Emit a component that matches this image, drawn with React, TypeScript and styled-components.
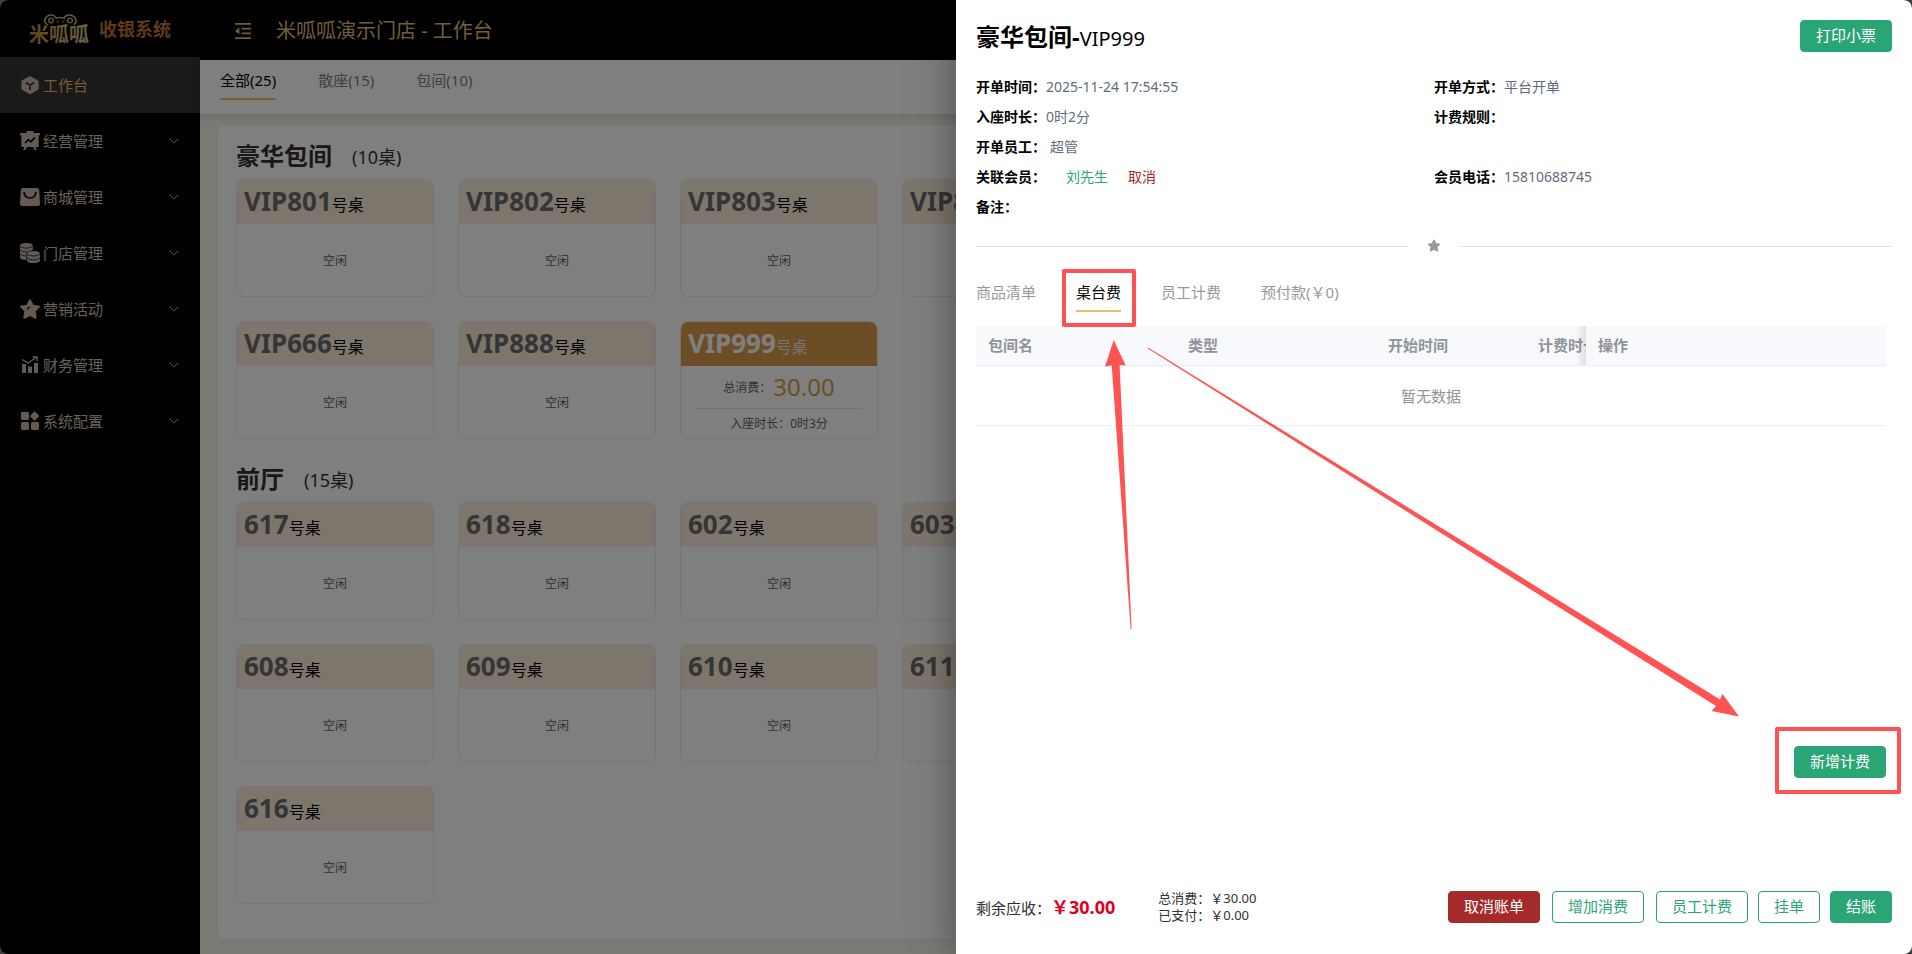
import React from "react";
import styled, { createGlobalStyle, css } from "styled-components";

const gold = "#e6c068";
const green = "#2aa676";
const red = "#ff5252";

const GlobalStyle = createGlobalStyle`
  * { box-sizing: border-box; }
  html, body { margin: 0; padding: 0; }
  body {
    background: #3c3c3e;
    color: #303133;
    font-family: "Noto Sans", "Noto Sans CJK SC", sans-serif;
    font-size: 15px;
  }
  h1, h2, p, dl, dd, dt { margin: 0; font-weight: inherit; }
  button { font-family: inherit; cursor: pointer; }
  a { text-decoration: none; }
`;

const Shell = styled.div`
  position: relative;
  display: flex;
  min-height: 100vh;
  border-radius: 8px;
  overflow: hidden;
  background: #f6f2e8;
`;

/* ---------- side navigation ---------- */

const Sidebar = styled.aside`
  flex: none;
  width: 200px;
  background: #000;
`;

const Brand = styled.div`
  display: flex;
  align-items: center;
  gap: 5px;
  height: 57px;
  padding-left: 28px;
`;

const BrandName = styled.span`
  color: #bc762c;
  font-size: 18px;
  line-height: 24px;
  font-weight: 700;
`;

const NavLink = styled.a<{ $active?: boolean }>`
  display: flex;
  align-items: center;
  gap: 3px;
  height: 56px;
  padding: 0 20px;
  font-size: 15px;
  color: ${(p) => (p.$active ? gold : "#d3c3b0")};
  background: ${(p) => (p.$active ? "#343434" : "transparent")};
`;

const NavLabel = styled.span`
  flex: 1;
  padding-bottom: 2px;
`;

const NavIcon = styled.svg`
  flex: none;
  width: 20px;
  height: 20px;
  color: #cbb5a2;
`;

/* ---------- main area ---------- */

const Main = styled.div`
  flex: 1;
  min-width: 0;
  display: flex;
  flex-direction: column;
`;

const TopBar = styled.header`
  display: flex;
  align-items: center;
  gap: 24px;
  height: 60px;
  padding: 2px 34px 0;
  background: #000;
  color: #dfbb78;
`;

const PageTitle = styled.h1`
  font-size: 20px;
  line-height: 28px;
`;

const IconButton = styled.button`
  display: flex;
  padding: 0;
  border: 0;
  background: none;
  color: inherit;
`;

const AreaTabs = styled.nav`
  position: relative;
  display: flex;
  gap: 42px;
  height: 54px;
  padding: 4px 20px 0;
  background: #fff;
  box-shadow: 0 2px 8px rgba(0, 0, 0, 0.12);
`;

const Tab = styled.button<{ $active?: boolean }>`
  position: relative;
  height: 36px;
  padding: 0 0 2px;
  border: 0;
  border-bottom: 2px solid ${(p) => (p.$active ? gold : "transparent")};
  background: none;
  color: ${(p) => (p.$active ? "#000" : "#999")};
  font-size: 15px;
  line-height: 32px;
  white-space: nowrap;
`;

const AreaTab = styled(Tab)`
  color: ${(p) => (p.$active ? "#000" : "#808080")};
`;

const Content = styled.main`
  flex: 1;
  display: flex;
  padding: 10px 16px 14px;
`;

const Panel = styled.div`
  flex: 1;
  min-width: 0;
  padding: 15px 19px 10px;
  border: 1px solid #ebeae6;
  border-radius: 8px;
  background: #fff;
  overflow: hidden;
`;

const AreaHeading = styled.div`
  display: flex;
  align-items: center;
  gap: 20px;
  height: 32px;
  margin-bottom: 7px;
  font-size: 18px;
`;

const AreaName = styled.h2`
  font-size: 24px;
  line-height: 32px;
  font-weight: 700;
`;

const CardRow = styled.div`
  display: flex;
  gap: 24px;
  margin-bottom: 24px;
`;

const Card = styled.article`
  flex: none;
  display: flex;
  flex-direction: column;
  width: 198px;
  height: 118px;
  border: 1px solid #ebebeb;
  border-radius: 8px;
  overflow: hidden;
  color: #606266;
  font-size: 12px;
`;

const CardHead = styled.header<{ $busy?: boolean }>`
  display: flex;
  align-items: baseline;
  height: 44px;
  padding-left: 7px;
  line-height: 42px;
  font-size: 16px;
  background: ${(p) => (p.$busy ? "#da9b4c" : "#f8ecd9")};
  color: ${(p) => (p.$busy ? "#e8e8e8" : "#000")};
  strong {
    font-size: 26px;
    color: ${(p) => (p.$busy ? "#fff" : "#6b6b6b")};
  }
`;

const CardBody = styled.div`
  flex: 1;
  display: flex;
  flex-direction: column;
  align-items: center;
  justify-content: center;
`;

const Spend = styled.p`
  display: flex;
  align-items: center;
  justify-content: center;
  gap: 2px;
  width: 166px;
  height: 43px;
  border-bottom: 1px solid #e4e4e4;
  strong {
    font-size: 24px;
    font-weight: 400;
    line-height: 32px;
    color: #da9b4c;
  }
`;

const Seated = styled.p`
  line-height: 29px;
`;

/* ---------- drawer ---------- */

const Mask = styled.div`
  position: absolute;
  inset: 0;
  background: rgba(0, 0, 0, 0.5);
`;

const Drawer = styled.section`
  position: absolute;
  top: 0;
  right: 0;
  bottom: 0;
  width: 50%;
  display: flex;
  flex-direction: column;
  padding: 20px 20px 31px;
  background: #fff;
  border-radius: 0 8px 8px 0;
  box-shadow: -8px 0 24px rgba(0, 0, 0, 0.2), -16px 0 48px rgba(0, 0, 0, 0.08);
`;

const DrawerHead = styled.header`
  display: flex;
  align-items: center;
  justify-content: space-between;
  height: 32px;
  margin-bottom: 20px;
`;

const DrawerTitle = styled.h2`
  padding-top: 4px;
  color: #000;
  font-size: 20px;
  line-height: 32px;
  strong {
    font-size: 24px;
  }
`;

const buttonTone = {
  solid: css`
    background: ${green};
    border-color: ${green};
    color: #fff;
  `,
  outline: css`
    background: #fff;
    border-color: ${green};
    color: ${green};
  `,
  danger: css`
    background: #a52a2a;
    border-color: #a52a2a;
    color: #fff;
  `,
};

const Button = styled.button<{ $tone: keyof typeof buttonTone }>`
  position: relative;
  height: 32px;
  padding: 0 15px 2px;
  border: 1px solid;
  border-radius: 4px;
  font-size: 15px;
  line-height: 28px;
  white-space: nowrap;
  ${(p) => buttonTone[p.$tone]}
`;

const InfoGrid = styled.dl`
  display: grid;
  grid-template-columns: 1fr 1fr;
  grid-auto-rows: 30px;
`;

const InfoItem = styled.div<{ $wide?: boolean }>`
  display: flex;
  font-size: 14px;
  line-height: 30px;
  grid-column: ${(p) => (p.$wide ? "1 / -1" : "auto")};
  dt {
    color: #000;
    font-weight: 700;
  }
  dd {
    color: #5f6b80;
  }
`;

const Staff = styled.span`
  margin-left: 4px;
`;

const Action = styled.a<{ $danger?: boolean }>`
  margin-left: 20px;
  color: ${(p) => (p.$danger ? "#a52a2a" : green)};
`;

const Divider = styled.div`
  display: flex;
  align-items: center;
  gap: 20px;
  height: 14px;
  margin: 17px 0 23px;
  &::before,
  &::after {
    content: "";
    flex: 1;
    height: 1px;
    background: #dcdfe6;
  }
`;

const BillTabs = styled.nav`
  display: flex;
  gap: 40px;
  margin-bottom: 14px;
`;

const MarkBox = styled.i`
  position: absolute;
  inset: -7px -15px -17px -14px;
  border: 4px solid ${red};
  border-radius: 2px;
  pointer-events: none;
`;

const AddMark = styled(MarkBox)`
  inset: -20px -16px -17px -20px;
`;

const BillPane = styled.div`
  flex: 1;
  display: flex;
  flex-direction: column;
  justify-content: space-between;
  align-items: flex-end;
  padding-right: 6px;
`;

const Table = styled.table`
  width: 100%;
  table-layout: fixed;
  border-collapse: separate;
  border-spacing: 0;
  color: #909399;
  font-size: 15px;
  th,
  td {
    padding: 0 12px;
    border-bottom: 1px solid #ebeef5;
  }
  th {
    height: 40px;
    padding-bottom: 2px;
    overflow: hidden;
    background: #f8f9fc;
    text-align: left;
    font-weight: 700;
    white-space: nowrap;
  }
  td {
    height: 60px;
    text-align: center;
  }
`;

const Column = styled.col<{ $width?: number }>`
  width: ${(p) => (p.$width ? `${p.$width}px` : "auto")};
`;

const ClippedHead = styled.th`
  position: relative;
  &::after {
    content: "";
    position: absolute;
    top: 0;
    right: 0;
    bottom: 0;
    width: 10px;
    background: linear-gradient(to left, rgba(0, 0, 0, 0.1), transparent);
  }
`;

const Footer = styled.footer`
  display: flex;
  align-items: center;
  justify-content: space-between;
  height: 32px;
  margin-top: 113px;
`;

const Totals = styled.div`
  display: flex;
  align-items: center;
  gap: 43px;
`;

const Due = styled.p`
  display: flex;
  align-items: center;
  strong {
    color: #e0001b;
    font-size: 18px;
    line-height: 32px;
  }
`;

const Paid = styled.div`
  font-size: 13px;
  line-height: 17px;
`;

const Actions = styled.div<{ $gap: number }>`
  display: flex;
  gap: ${(p) => p.$gap}px;
`;

const Arrows = styled.svg`
  position: absolute;
  top: 0;
  left: 0;
  width: 956px;
  height: 954px;
  pointer-events: none;
`;

/* ---------- icons ---------- */

const icons: Record<string, React.ReactNode> = {
  cube: (
    <>
      <path d="M9 1.500 Q10 1 11 1.500 L17.600 5.200 Q18.600 5.800 18.600 7 V13.400 Q18.600 14.400 17.600 15 L11 18.700 Q10 19.300 9 18.700 L2.400 15 Q1.400 14.400 1.400 13.400 V7 Q1.400 5.800 2.400 5.200Z" fill="currentColor" />
      <path d="M5.800 7.600 L10 10 L14.200 7.600 M10 10 V15" fill="none" stroke="#343434" strokeWidth="1.800" />
    </>
  ),
  board: (
    <>
      <path d="M6.500 0 H13.500 V2 H20 V4.200 H18.700 V15.400 Q18.700 16 18 16 H15.500 L17 19 H14.600 L13 16 H7 L5.400 19 H3 L4.500 16 H2 Q1.300 16 1.300 15.400 V4.200 H0 V2 H6.500Z" fill="currentColor" />
      <path d="M5 12 L8.500 8.600 L10.800 10.800 L15 6.400" fill="none" stroke="#000" strokeWidth="1.600" />
    </>
  ),
  bag: (
    <>
      <path d="M3 1 H17 Q19 1 19.200 3 L20 16.400 Q20 19 17.800 19 H2.200 Q0 19 0 16.400 L.8 3 Q1 1 3 1Z" fill="currentColor" />
      <path d="M4 5 Q4.600 11 10 11 T16 5" fill="none" stroke="#000" strokeWidth="1.700" />
    </>
  ),
  coins: (
    <>
      <path d="M0 2.600 Q0 0 6.400 0 T12.800 2.600 V7 Q6.400 8 6.400 11 V17 Q0 16.600 0 14.200Z" fill="currentColor" />
      <path d="M0 3 Q2 5.200 6.400 5.200 T12.800 3 M0 7 Q2 9.200 7 9 M0 11 Q2 13 6.400 13" fill="none" stroke="#000" strokeWidth="0.700" />
      <path d="M7 10.600 Q7 8 13.500 8 T20 10.600 V17.200 Q20 20 13.500 20 T7 17.200Z" fill="currentColor" />
      <path d="M7 11 Q9 13 13.500 13 T20 11 M7 15 Q9 17 13.500 17 T20 15" fill="none" stroke="#000" strokeWidth="0.700" />
    </>
  ),
  star: (
    <>
      <path d="M10 .8 L13 6.400 L19.400 7.400 L15 12 L16 19 L10 16.400 L4 19 L5 12 L.6 7.400 L7 6.400Z" fill="currentColor" stroke="currentColor" strokeWidth="1.400" strokeLinejoin="round" />
      <path d="M7.400 10.600 Q7.600 8.600 10 8" fill="none" stroke="#000" strokeWidth="1.100" />
    </>
  ),
  chart: (
    <>
      <path d="M2 9 H6 V18 H2Z M8 11.400 H12 V18 H8Z M14 8 H18 V18 H14Z" fill="currentColor" />
      <path d="M2 4.500 L8 8 L16 2.500 M12.600 2 H17 V6" fill="none" stroke="currentColor" strokeWidth="1.400" />
    </>
  ),
  grid: (
    <>
      <rect x="1" y="1" width="8" height="8" rx="1.400" fill="currentColor" />
      <rect x="1" y="11" width="8" height="8" rx="1.400" fill="currentColor" />
      <rect x="11" y="11" width="8" height="8" rx="1.400" fill="currentColor" />
      <path d="M14.600 .8 L18.900 5 L14.600 9.300 L10.300 5Z" fill="currentColor" stroke="currentColor" strokeLinejoin="round" />
    </>
  ),
};

const Chevron = () => (
  <svg width="12" height="12" viewBox="0 0 12 12" aria-hidden>
    <path d="M2 4 L6 8 L10 4" fill="none" stroke="#b9aa99" strokeWidth="1" />
  </svg>
);

const FoldIcon = () => (
  <svg width="18" height="18" viewBox="0 0 18 18" fill="currentColor" aria-hidden>
    <path d="M1 1 H17 V2.800 H1Z M7.500 5.800 H17 V7.600 H7.500Z M7.500 10.400 H17 V12.200 H7.500Z M1 15.200 H17 V17 H1Z M1 9 L5.400 5.600 V12.400Z" />
  </svg>
);

const Logo = () => (
  <svg width="66" height="40" viewBox="0 -3 66 40" role="img" aria-label="米呱呱">
    <defs>
      <linearGradient id="brandGold" x1="0" x2="1">
        <stop offset="0" stopColor="#b48a36" />
        <stop offset="1" stopColor="#d6c795" />
      </linearGradient>
    </defs>
    <text x="1" y="30" fontSize="20" fontWeight="700" fill="url(#brandGold)" fontFamily="Noto Sans CJK SC">
      米呱呱
    </text>
    <g fill="none" stroke="#cdb06c" strokeWidth="1.600">
      <path d="M20 13 Q16 11 17 7 Q19 2.500 24 3 Q27 3.500 28 6 Q32 5 36 6 Q38 2.500 42 3 Q46.500 3.500 48 8 Q48.300 11 46 13" />
      <circle cx="23" cy="8.500" r="2.400" strokeWidth="1.300" />
      <circle cx="42" cy="8.500" r="2.400" strokeWidth="1.300" />
      <path d="M29 9.500 H30.500 M34 9.500 H35.500" />
    </g>
  </svg>
);

const StarIcon = () => (
  <svg width="14" height="14" viewBox="0 0 14 14" aria-hidden>
    <path d="M7 .8 L8.900 4.600 L13 5.200 L10 8.100 L10.700 12.300 L7 10.300 L3.300 12.300 L4 8.100 L1 5.200 L5.100 4.600Z" fill="#999" stroke="#999" strokeLinejoin="round" />
  </svg>
);

/* ---------- data ---------- */

const menu = [
  { icon: "cube", label: "工作台", active: true },
  { icon: "board", label: "经营管理" },
  { icon: "bag", label: "商城管理" },
  { icon: "coins", label: "门店管理" },
  { icon: "star", label: "营销活动" },
  { icon: "chart", label: "财务管理" },
  { icon: "grid", label: "系统配置" },
];

interface TableInfo {
  name: string;
  spend?: string;
  seated?: string;
}

const areas: { name: string; count: number; rows: TableInfo[][] }[] = [
  {
    name: "豪华包间",
    count: 10,
    rows: [
      [{ name: "VIP801" }, { name: "VIP802" }, { name: "VIP803" }, { name: "VIP804" }],
      [{ name: "VIP666" }, { name: "VIP888" }, { name: "VIP999", spend: "30.00", seated: "0时3分" }],
    ],
  },
  {
    name: "前厅",
    count: 15,
    rows: [
      [{ name: "617" }, { name: "618" }, { name: "602" }, { name: "603" }],
      [{ name: "608" }, { name: "609" }, { name: "610" }, { name: "611" }],
      [{ name: "616" }],
    ],
  },
];

const TableCard = ({ name, spend, seated }: TableInfo) => (
  <Card>
    <CardHead $busy={!!spend}>
      <strong>{name}</strong>号桌
    </CardHead>
    <CardBody>
      {spend ? (
        <>
          <Spend>
            总消费：<strong>{spend}</strong>
          </Spend>
          <Seated>入座时长：{seated}</Seated>
        </>
      ) : (
        "空闲"
      )}
    </CardBody>
  </Card>
);

export default function App() {
  return (
    <>
      <GlobalStyle />
      <Shell>
        <Sidebar>
          <Brand>
            <Logo />
            <BrandName>收银系统</BrandName>
          </Brand>
          <nav>
            {menu.map((m) => (
              <NavLink key={m.label} href="#" $active={m.active}>
                <NavIcon viewBox="0 0 20 20" aria-hidden>
                  {icons[m.icon]}
                </NavIcon>
                <NavLabel>{m.label}</NavLabel>
                {!m.active && <Chevron />}
              </NavLink>
            ))}
          </nav>
        </Sidebar>

        <Main>
          <TopBar>
            <IconButton aria-label="菜单">
              <FoldIcon />
            </IconButton>
            <PageTitle>米呱呱演示门店 - 工作台</PageTitle>
          </TopBar>
          <AreaTabs>
            <AreaTab $active>全部(25)</AreaTab>
            <AreaTab>散座(15)</AreaTab>
            <AreaTab>包间(10)</AreaTab>
          </AreaTabs>
          <Content>
            <Panel>
              {areas.map((area) => (
                <section key={area.name}>
                  <AreaHeading>
                    <AreaName>{area.name}</AreaName>
                    <span>({area.count}桌)</span>
                  </AreaHeading>
                  {area.rows.map((row) => (
                    <CardRow key={row[0].name}>
                      {row.map((t) => (
                        <TableCard key={t.name} {...t} />
                      ))}
                    </CardRow>
                  ))}
                </section>
              ))}
            </Panel>
          </Content>
        </Main>

        <Mask />

        <Drawer>
          <DrawerHead>
            <DrawerTitle>
              <strong>豪华包间-</strong>VIP999
            </DrawerTitle>
            <Button $tone="solid">打印小票</Button>
          </DrawerHead>

          <InfoGrid>
            <InfoItem>
              <dt>开单时间：</dt>
              <dd>2025-11-24 17:54:55</dd>
            </InfoItem>
            <InfoItem>
              <dt>开单方式：</dt>
              <dd>平台开单</dd>
            </InfoItem>
            <InfoItem>
              <dt>入座时长：</dt>
              <dd>0时2分</dd>
            </InfoItem>
            <InfoItem>
              <dt>计费规则：</dt>
              <dd />
            </InfoItem>
            <InfoItem $wide>
              <dt>开单员工：</dt>
              <dd>
                <Staff>超管</Staff>
              </dd>
            </InfoItem>
            <InfoItem>
              <dt>关联会员：</dt>
              <dd>
                <Action href="#">刘先生</Action>
                <Action href="#" $danger>
                  取消
                </Action>
              </dd>
            </InfoItem>
            <InfoItem>
              <dt>会员电话：</dt>
              <dd>15810688745</dd>
            </InfoItem>
            <InfoItem $wide>
              <dt>备注：</dt>
              <dd />
            </InfoItem>
          </InfoGrid>

          <Divider>
            <StarIcon />
          </Divider>

          <BillTabs>
            <Tab>商品清单</Tab>
            <Tab $active>
              桌台费
              <MarkBox />
            </Tab>
            <Tab>员工计费</Tab>
            <Tab>预付款(￥0)</Tab>
          </BillTabs>

          <BillPane>
            <Table>
              <colgroup>
                <Column $width={200} />
                <Column $width={200} />
                <Column $width={150} />
                <Column />
                <Column $width={300} />
              </colgroup>
              <thead>
                <tr>
                  <th>包间名</th>
                  <th>类型</th>
                  <th>开始时间</th>
                  <ClippedHead>计费时长</ClippedHead>
                  <th>操作</th>
                </tr>
              </thead>
              <tbody>
                <tr>
                  <td colSpan={5}>暂无数据</td>
                </tr>
              </tbody>
            </Table>
            <Button $tone="solid">
              新增计费
              <AddMark />
            </Button>
          </BillPane>

          <Footer>
            <Totals>
              <Due>
                剩余应收：<strong>￥30.00</strong>
              </Due>
              <Paid>
                <p>总消费：￥30.00</p>
                <p>已支付：￥0.00</p>
              </Paid>
            </Totals>
            <Actions $gap={10}>
              <Actions $gap={12}>
                <Button $tone="danger">取消账单</Button>
                <Button $tone="outline">增加消费</Button>
                <Button $tone="outline">员工计费</Button>
              </Actions>
              <Button $tone="outline">挂单</Button>
              <Button $tone="solid">结账</Button>
            </Actions>
          </Footer>

          <Arrows viewBox="0 0 956 954" fill={red} aria-hidden>
            <path d="M157.700 340 L169.700 365.500 L163.600 365 L175.600 629 L174.600 629 L155.700 365.300 L149 366.700Z" />
            <path d="M783 716.500 L766.500 694 L764 699.500 L192 347.500 L191.700 348.500 L760 706 L755.700 711Z" />
          </Arrows>
        </Drawer>
      </Shell>
    </>
  );
}
